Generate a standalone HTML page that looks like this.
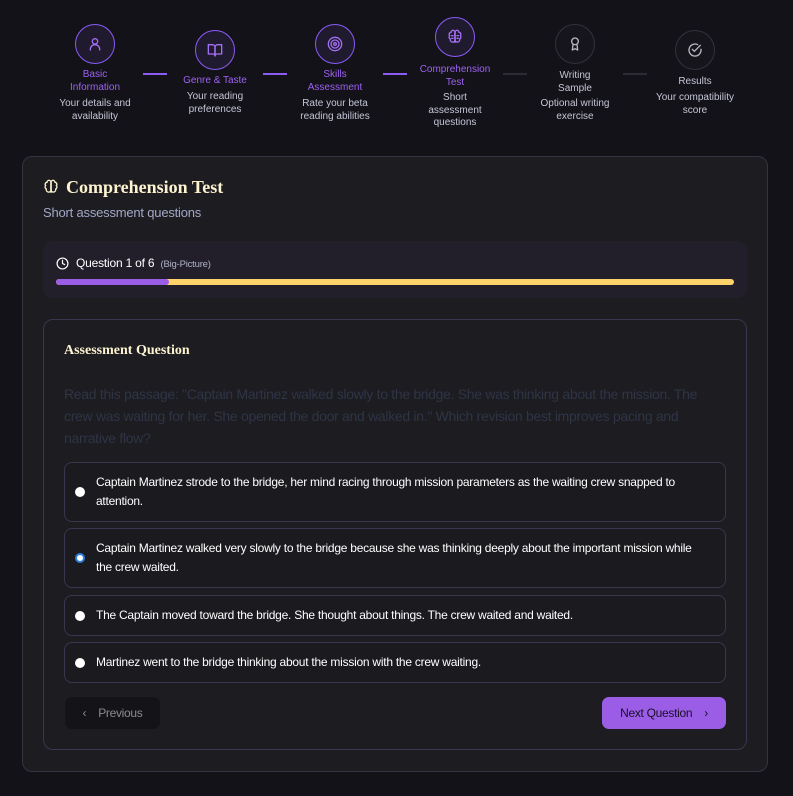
<!DOCTYPE html>
<html><head><style>
*{margin:0;padding:0;box-sizing:border-box}
body{width:793px;height:796px;background:#131218;font-family:"Liberation Sans",sans-serif;position:relative;overflow:hidden}
.a{position:absolute}
.circ{position:absolute;width:40px;height:40px;border-radius:50%;display:flex;align-items:center;justify-content:center}
.done{border:1.5px solid #8b5cf6;background:#1f1a2e}
.todo{border:1px solid #33323c;background:#16151b}
.lbl{position:absolute;width:100px;text-align:center;font-size:10px;line-height:12.5px}
.lp{color:#9d62f2}
.lg{color:#c4c6d6}
.ds{color:#c4c6d6}
.ln{position:absolute;height:1.5px;width:24px;top:73px}
.opt{position:absolute;left:64px;width:662px;border:1px solid #3a3650;border-radius:8px;background:#1a1a1f;color:#fff;font-size:12px;letter-spacing:-0.25px;line-height:19px;padding:0 20px 0 31px;display:flex;align-items:center}
.rad{position:absolute;left:10px;width:10px;height:10px;border-radius:50%;background:#fff}
</style></head><body>
<div class="circ done" style="left:75px;top:24px"><svg width="16" height="16" viewBox="0 0 24 24" fill="none" stroke="#a470f5" stroke-width="2" stroke-linecap="round"><circle cx="12" cy="8" r="4"/><path d="M5 21v-1a7 7 0 0 1 14 0v1"/></svg></div>
<div class="lbl lp" style="left:45px;top:69px">Basic<br>Information</div>
<div class="lbl ds" style="left:45px;top:98px">Your details and<br>availability</div>
<div class="ln" style="left:143px;background:#8b5cf6"></div>

<div class="circ done" style="left:195px;top:30px"><svg width="16" height="16" viewBox="0 0 24 24" fill="none" stroke="#a470f5" stroke-width="2" stroke-linejoin="round"><path d="M2 4h6a4 4 0 0 1 4 4v13a3 3 0 0 0-3-3H2z"/><path d="M22 4h-6a4 4 0 0 0-4 4v13a3 3 0 0 1 3-3h7z"/></svg></div>
<div class="lbl lp" style="left:165px;top:75px">Genre &amp; Taste</div>
<div class="lbl ds" style="left:165px;top:91px">Your reading<br>preferences</div>
<div class="ln" style="left:263px;background:#8b5cf6"></div>

<div class="circ done" style="left:315px;top:24px"><svg width="16" height="16" viewBox="0 0 24 24" fill="none" stroke="#a470f5" stroke-width="2"><circle cx="12" cy="12" r="10"/><circle cx="12" cy="12" r="6"/><circle cx="12" cy="12" r="2"/></svg></div>
<div class="lbl lp" style="left:285px;top:69px">Skills<br>Assessment</div>
<div class="lbl ds" style="left:285px;top:98px">Rate your beta<br>reading abilities</div>
<div class="ln" style="left:383px;background:#8b5cf6"></div>

<div class="circ done" style="left:435px;top:17px"><svg width="16" height="16" viewBox="0 0 24 24" fill="none" stroke="#a470f5" stroke-width="2" stroke-linecap="round"><path d="M12 5a3 3 0 0 0-6 0 3 3 0 0 0-2 5 3 3 0 0 0 1 5 3 3 0 0 0 7 2z"/><path d="M12 5a3 3 0 0 1 6 0 3 3 0 0 1 2 5 3 3 0 0 1-1 5 3 3 0 0 1-7 2z"/><path d="M12 5v15M9 10h-2M15 10h2M9 14H7M15 14h2"/></svg></div>
<div class="lbl lp" style="left:405px;top:64px">Comprehension<br>Test</div>
<div class="lbl ds" style="left:405px;top:92px">Short<br>assessment<br>questions</div>
<div class="ln" style="left:503px;background:#2c2b33"></div>

<div class="circ todo" style="left:555px;top:24px"><svg width="16" height="16" viewBox="0 0 24 24" fill="none" stroke="#b8b8c4" stroke-width="2" stroke-linejoin="round"><circle cx="12" cy="8" r="5"/><path d="M9 12.5 8 21l4-2 4 2-1-8.5"/></svg></div>
<div class="lbl lg" style="left:525px;top:70px">Writing<br>Sample</div>
<div class="lbl ds" style="left:525px;top:98px">Optional writing<br>exercise</div>
<div class="ln" style="left:623px;background:#2c2b33"></div>

<div class="circ todo" style="left:675px;top:30px"><svg width="16" height="16" viewBox="0 0 24 24" fill="none" stroke="#b8b8c4" stroke-width="2" stroke-linecap="round"><path d="M21 11v1a9 9 0 1 1-5-8"/><path d="M8 11l3 3 9-9"/></svg></div>
<div class="lbl lg" style="left:645px;top:76px">Results</div>
<div class="lbl ds" style="left:645px;top:92px">Your compatibility<br>score</div>

<div class="a" style="left:22px;top:156px;width:746px;height:616px;background:#1c1c21;border:1px solid #35333f;border-radius:10px"></div>
<svg class="a" style="left:43px;top:179px" width="16" height="16" viewBox="0 0 24 24" fill="none" stroke="#fef3d0" stroke-width="2" stroke-linecap="round"><path d="M12 5a3 3 0 0 0-6 0 3 3 0 0 0-2 5 3 3 0 0 0 1 5 3 3 0 0 0 7 2z"/><path d="M12 5a3 3 0 0 1 6 0 3 3 0 0 1 2 5 3 3 0 0 1-1 5 3 3 0 0 1-7 2z"/><path d="M12 5v15"/></svg>
<div class="a" style="left:66px;top:177px;font-family:'Liberation Serif',serif;font-weight:bold;font-size:18px;color:#fef3d0">Comprehension Test</div>
<div class="a" style="left:43px;top:205px;font-size:13px;letter-spacing:-0.2px;color:#a4a8c6">Short assessment questions</div>

<div class="a" style="left:43px;top:241px;width:704px;height:57px;background:#221f2b;border-radius:10px"></div>
<svg class="a" style="left:56px;top:257px" width="13" height="13" viewBox="0 0 24 24" fill="none" stroke="#fff" stroke-width="2.2" stroke-linecap="round"><circle cx="12" cy="12" r="10"/><path d="M12 6v6l4 2"/></svg>
<div class="a" style="left:76px;top:256px;font-size:12px;letter-spacing:-0.2px;color:#fff">Question 1 of 6 <span style="font-size:9.5px;color:#b0b2c8;margin-left:3px">(Big-Picture)</span></div>
<div class="a" style="left:56px;top:279px;width:678px;height:6px;background:#fdd36a;border-radius:3px"></div>
<div class="a" style="left:56px;top:279px;width:113px;height:6px;background:#9b5de5;border-radius:3px"></div>

<div class="a" style="left:43px;top:319px;width:704px;height:431px;border:1px solid #3a3650;border-radius:10px"></div>
<div class="a" style="left:64px;top:343px;font-family:'Liberation Serif',serif;font-weight:bold;font-size:14px;color:#fef3d0">Assessment Question</div>
<div class="a" style="left:64px;top:383px;width:665px;font-size:14px;letter-spacing:-0.3px;line-height:22px;color:#2f3446">Read this passage: "Captain Martinez walked slowly to the bridge. She was thinking about the mission. The crew was waiting for her. She opened the door and walked in." Which revision best improves pacing and narrative flow?</div>

<div class="opt" style="top:462px;height:60px"><div class="rad"></div>Captain Martinez strode to the bridge, her mind racing through mission parameters as the waiting crew snapped to attention.</div>
<div class="opt" style="top:528px;height:60px"><div class="rad" style="background:#fff;border:2.5px solid #2b7fe0"></div>Captain Martinez walked very slowly to the bridge because she was thinking deeply about the important mission while the crew waited.</div>
<div class="opt" style="top:595px;height:41px"><div class="rad"></div>The Captain moved toward the bridge. She thought about things. The crew waited and waited.</div>
<div class="opt" style="top:642px;height:41px"><div class="rad"></div>Martinez went to the bridge thinking about the mission with the crew waiting.</div>

<div class="a" style="left:65px;top:697px;width:95px;height:32px;background:#141418;border-radius:7px;color:#8a8a90;font-size:12px;letter-spacing:-0.3px;display:flex;align-items:center;justify-content:center;gap:12px"><span>‹</span>Previous</div>
<div class="a" style="left:602px;top:697px;width:124px;height:32px;background:#9b5de5;border-radius:7px;color:#1a1028;font-size:12px;letter-spacing:-0.3px;display:flex;align-items:center;justify-content:center;gap:12px">Next Question<span>›</span></div>
</body></html>
